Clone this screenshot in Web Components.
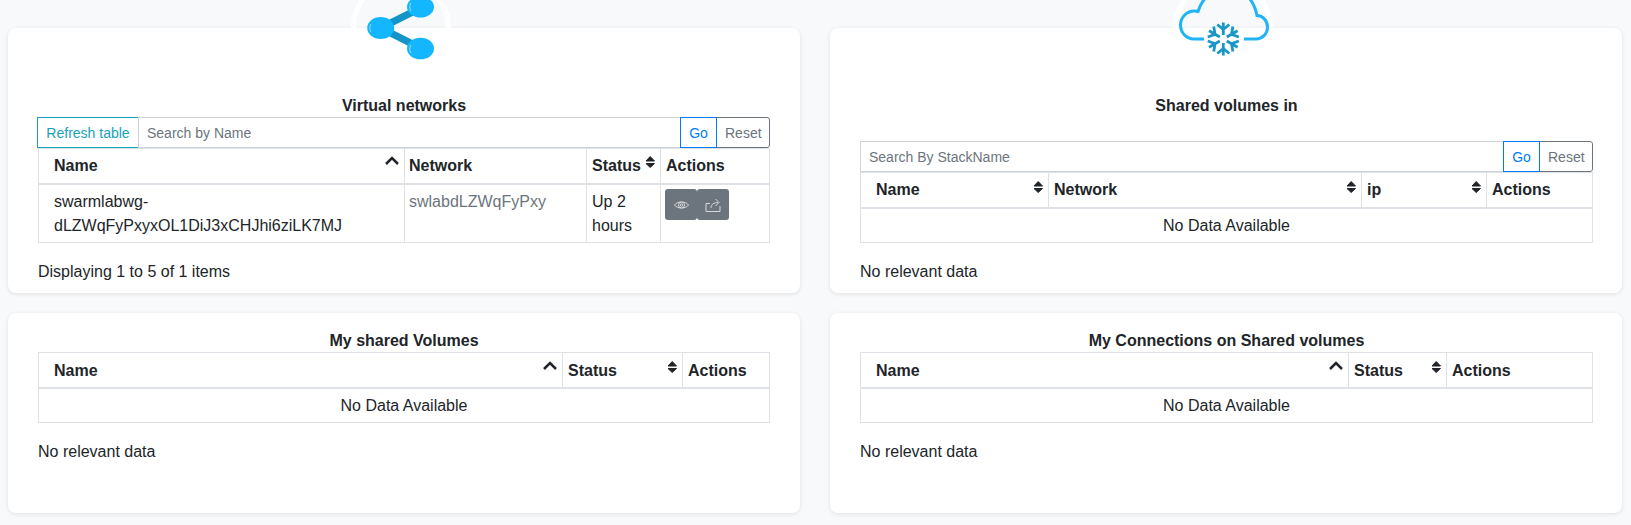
<!DOCTYPE html>
<html>
<head>
<meta charset="utf-8">
<title>Swarmlab</title>
<style>
    html, body { margin: 0; background: #f8f9fa; }
    body {
        height: 525px;
        overflow: hidden;
        font: 16px/24px "Liberation Sans", Arial, sans-serif;
        color: #212529;
    }
</style>
</head>
<body>
<lab-page>
    <lab-card heading="Virtual networks" icon="share" note="Displaying 1 to 5 of 1 items">
        <search-bar refresh placeholder="Search by Name"></search-bar>
        <data-table class="tucked" cols="366px 182px 74px 1fr" head="Name:up,Network,Status:both,Actions">
            <table-cell>swarmlabwg-<br>dLZWqFyPxyxOL1DiJ3xCHJhi6ziLK7MJ</table-cell>
            <table-cell muted>swlabdLZWqFyPxy</table-cell>
            <table-cell>Up 2 hours</table-cell>
            <table-cell><action-buttons></action-buttons></table-cell>
        </data-table>
    </lab-card>
    <lab-card class="right" heading="Shared volumes in" icon="cloud" note="No relevant data">
        <search-bar class="spaced" placeholder="Search By StackName"></search-bar>
        <data-table cols="188px 313px 125px 1fr" head="Name:both,Network:both,ip:both,Actions">
            <table-cell empty>No Data Available</table-cell>
        </data-table>
    </lab-card>
    <lab-card class="low" heading="My shared Volumes" note="No relevant data">
        <data-table class="roomy" cols="524px 120px 1fr" head="Name:up,Status:both,Actions">
            <table-cell empty>No Data Available</table-cell>
        </data-table>
    </lab-card>
    <lab-card class="low right" heading="My Connections on Shared volumes" note="No relevant data">
        <data-table class="roomy" cols="488px 98px 1fr" head="Name:up,Status:both,Actions">
            <table-cell empty>No Data Available</table-cell>
        </data-table>
    </lab-card>
</lab-page>

<script>
const ICONS = {
    share: `
        <svg width="100" height="60" viewBox="0 0 100 60">
            <path d="M29.700 28 69.500 8M29.700 28 69.500 48" stroke="#1495c8" stroke-width="7" fill="none"/>
            <ellipse cx="29.700" cy="28" rx="13.500" ry="11" fill="#14b6ff"/>
            <ellipse cx="69.500" cy="7" rx="13.500" ry="10.500" fill="#14b6ff"/>
            <ellipse cx="69.500" cy="48.500" rx="13.500" ry="10.800" fill="#14b6ff"/>
            <path d="M19.500 24q-1.500 4 0 8M59.500 3q-1.500 4 0 8M59.500 45q-1.500 4 0 8" stroke="#8fdcff" fill="none"/>
        </svg>`,
    cloud: `
        <svg width="100" height="60" viewBox="0 0 100 60">
            <path d="M31 39H21C13 39 7.500 32.500 7.500 25C7.500 17 14 11 21.500 11C23 11 24 11.200 25 11.500C27 5 31 -1 35 -5C42 -12 66 -12 73 -5C78 -1 82 6 84 15.500C90 15.500 94.500 21 94.500 27C94.500 34 89 39 83 39H71"
                stroke="#1eb4f5" stroke-width="3" fill="none"/>
            <g stroke="#1a96c8" stroke-width="2.800" fill="none">
                <g id="arm">
                    <path d="M50.300 35V22.500M44.300 24.500l6 5 6-5"/>
                </g>
                <use href="#arm" transform="rotate(60 50.300 39)"/>
                <use href="#arm" transform="rotate(120 50.300 39)"/>
                <use href="#arm" transform="rotate(180 50.300 39)"/>
                <use href="#arm" transform="rotate(240 50.300 39)"/>
                <use href="#arm" transform="rotate(300 50.300 39)"/>
            </g>
        </svg>`
};

class LabPage extends HTMLElement {
    constructor() {
        super();
        this.attachShadow({ mode: 'open' });
        this.shadowRoot.innerHTML = `
            <style>
                :host {
                    display: grid;
                    grid-template-columns: 1fr 1fr;
                    grid-template-rows: 265px 200px;
                    gap: 20px 30px;
                    padding: 28px 9px 0 8px;
                }
            </style>
            <slot></slot>
        `;
    }
}

class LabCard extends HTMLElement {
    constructor() {
        super();
        this.attachShadow({ mode: 'open' });
        const icon = ICONS[this.getAttribute('icon')];
        this.shadowRoot.innerHTML = `
            <style>
                :host {
                    display: block;
                    position: relative;
                    padding: 65px 30px 0;
                    background: #fff;
                    border-radius: 8px;
                    box-shadow: 0 1px 4px rgba(0, 0, 0, .1);
                }
                :host(.low) { padding-top: 15px; }
                :host(.right) { padding-right: 29px; }
                h2 {
                    margin: 0;
                    padding-top: 1px;
                    font-size: 16px;
                    line-height: 23px;
                    font-weight: 700;
                    text-align: center;
                }
                .badge {
                    position: absolute;
                    top: -28px;
                    left: 343px;
                    width: 100px;
                    height: 60px;
                    overflow: hidden;
                }
                .ring {
                    position: absolute;
                    left: 0;
                    top: -22px;
                    width: 90px;
                    height: 90px;
                    border: 5px solid #fff;
                    border-radius: 50%;
                    clip-path: inset(0 0 45px 0);
                }
                svg { position: absolute; left: 0; top: 0; }
                p { margin: 17px 0 0; }
            </style>
            ${icon ? `<div class="badge"><div class="ring"></div>${icon}</div>` : ''}
            <h2>${this.getAttribute('heading')}</h2>
            <slot></slot>
            <p>${this.getAttribute('note')}</p>
        `;
    }
}

class SearchBar extends HTMLElement {
    constructor() {
        super();
        this.attachShadow({ mode: 'open' });
        const refresh = this.hasAttribute('refresh') ? '<button class="refresh">Refresh table</button>' : '';
        this.shadowRoot.innerHTML = `
            <style>
                :host { display: flex; height: 31px; }
                :host(.spaced) { margin-top: 24px; }
                button, .input {
                    box-sizing: border-box;
                    height: 31px;
                    font: 14px/21px "Liberation Sans", Arial, sans-serif;
                    background: #fff;
                    border: 1px solid #ced4da;
                    padding: 5px 8px 3px;
                    white-space: nowrap;
                }
                .refresh { color: #17a2b8; border-color: #17a2b8; width: 102px; margin-left: -1px; }
                .input { flex: 1; min-width: 0; color: #6c757d; }
                .refresh + .input { margin-left: -1px; }
                .input:first-child { border-radius: 3px 0 0 3px; }
                .go { color: #007bff; border-color: #007bff; margin-left: -1px; width: 37px; position: relative; }
                .reset { color: #6c757d; border-color: #6c757d; margin-left: -1px; width: 54px; border-radius: 0 3px 3px 0; }
            </style>
            ${refresh}
            <div class="input">${this.getAttribute('placeholder')}</div>
            <button class="go">Go</button>
            <button class="reset">Reset</button>
        `;
    }
}

class DataTable extends HTMLElement {
    constructor() {
        super();
        this.attachShadow({ mode: 'open' });
        const cols = this.getAttribute('head').split(',');
        const head = cols.map((col) => {
            const [label, sort] = col.split(':');
            return `<div class="th">${label}${sort ? `<sort-mark dir="${sort}"></sort-mark>` : ''}</div>`;
        }).join('');
        this.shadowRoot.innerHTML = `
            <style>
                :host { display: block; }
                .grid {
                    display: grid;
                    grid-template-columns: ${this.getAttribute('cols')};
                    border: solid #dee2e6;
                    border-width: 1px 1px 0 1px;
                }
                .th {
                    position: relative;
                    box-sizing: border-box;
                    height: 36px;
                    padding: 5px;
                    font-weight: 700;
                    border-bottom: 2px solid #dee2e6;
                    border-right: 1px solid #dee2e6;
                }
                .th:first-child { padding-left: 15px; }
                .th:nth-child(${cols.length}) { border-right: 0; }
                :host(.roomy) .th { padding-top: 6px; }
                :host(.tucked) .th:nth-child(2) { padding-left: 4px; }
                :host(.tucked) sort-mark { top: 5px; }
            </style>
            <div class="grid">${head}<slot></slot></div>
        `;
    }
}

class SortMark extends HTMLElement {
    constructor() {
        super();
        this.attachShadow({ mode: 'open' });
        const up = this.getAttribute('dir') === 'up';
        this.shadowRoot.innerHTML = `
            <style>
                :host { position: absolute; right: 5px; top: 6px; width: 14px; height: 18px; }
                svg { display: block; }
            </style>
            ${up
                ? '<svg width="14" height="18" viewBox="0 0 14 18"><path d="M1 10 7 4 13 10" stroke="#212529" stroke-width="2.500" fill="none"/></svg>'
                : '<svg width="14" height="18" viewBox="0 0 14 18"><path d="M9.200 2.500 13.500 7H5ZM9.200 13.500 13.500 9.500H5Z" fill="#212529" stroke="#212529" stroke-linejoin="round"/></svg>'}
        `;
    }
}

class TableCell extends HTMLElement {
    constructor() {
        super();
        this.attachShadow({ mode: 'open' });
        this.shadowRoot.innerHTML = `
            <style>
                :host {
                    display: block;
                    box-sizing: border-box;
                    padding: 5px 5px 4px;
                    border-right: 1px solid #dee2e6;
                    border-bottom: 1px solid #dee2e6;
                }
                :host(:first-of-type) { padding-left: 15px; }
                :host(:last-of-type) { border-right: 0; }
                :host([muted]) { color: #6c757d; padding-left: 4px; }
                :host([empty]) { grid-column: 1 / -1; text-align: center; padding-left: 5px; }
            </style>
            <slot></slot>
        `;
    }
}

class ActionButtons extends HTMLElement {
    constructor() {
        super();
        this.attachShadow({ mode: 'open' });
        this.shadowRoot.innerHTML = `
            <style>
                :host { display: flex; margin: -1px 0 0 -1px; }
                div {
                    display: flex;
                    align-items: center;
                    justify-content: center;
                    width: 32px;
                    height: 31px;
                    background: #6c757d;
                    border-radius: 3px;
                }
                svg { margin-top: 1px; }
            </style>
            <div>
                <svg width="15" height="10" viewBox="0 0 15 10" fill="none" stroke="#d5d8db">
                    <path d="M.5 5C3 1 12 1 14.500 5C12 9 3 9 .5 5Z"/>
                    <circle cx="7.500" cy="5" r="3"/>
                    <circle cx="7.500" cy="5" r="1.200"/>
                </svg>
            </div>
            <div>
                <svg width="16" height="14" viewBox="0 0 16 14" fill="none" stroke="#d5d8db">
                    <path d="M5 5.500H1V13.500H15V8"/>
                    <path d="M6 10C6 6.500 9 4.500 13 4.500M10.500 1 14 4.500 10.500 8"/>
                </svg>
            </div>
        `;
    }
}

customElements.define('lab-page', LabPage);
customElements.define('lab-card', LabCard);
customElements.define('search-bar', SearchBar);
customElements.define('data-table', DataTable);
customElements.define('sort-mark', SortMark);
customElements.define('table-cell', TableCell);
customElements.define('action-buttons', ActionButtons);
</script>
</body>
</html>
